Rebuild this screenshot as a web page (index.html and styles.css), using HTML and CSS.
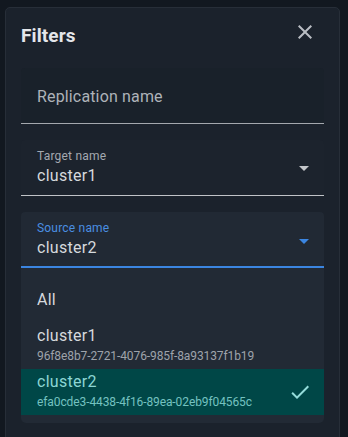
FILE: index.html
```html
<!DOCTYPE html>
<html>
<head>
<meta charset="utf-8">
<link rel="stylesheet" href="styles.css">
</head>
<body>
<div class="dialog">
  <div class="header">
    <h2 class="title">Filters</h2>
    <button class="close" aria-label="Close">
      <svg width="24" height="24" viewBox="0 0 24 24"><path d="M19 6.41 17.59 5 12 10.59 6.41 5 5 6.41 10.59 12 5 17.59 6.41 19 12 13.41 17.59 19 19 17.59 13.41 12z" fill="currentColor"/></svg>
    </button>
  </div>
  <div class="fields">
    <div class="field field-empty">
      <span class="placeholder">Replication name</span>
    </div>
    <div class="field field-select">
      <div class="field-text">
        <span class="label">Target name</span>
        <span class="value">cluster1</span>
      </div>
      <svg class="arrow" width="24" height="24" viewBox="0 0 24 24"><path d="M7 10l5 5 5-5z" fill="currentColor"/></svg>
    </div>
    <div class="select-wrap">
      <div class="field field-select field-focused">
        <div class="field-text">
          <span class="label">Source name</span>
          <span class="value">cluster2</span>
        </div>
        <svg class="arrow" width="24" height="24" viewBox="0 0 24 24"><path d="M7 10l5 5 5-5z" fill="currentColor"/></svg>
      </div>
      <ul class="menu">
        <li class="item item-single">All</li>
        <li class="item">
          <div class="item-text">
            <span class="primary">cluster1</span>
            <span class="secondary">96f8e8b7-2721-4076-985f-8a93137f1b19</span>
          </div>
        </li>
        <li class="item item-selected">
          <div class="item-text">
            <span class="primary">cluster2</span>
            <span class="secondary">efa0cde3-4438-4f16-89ea-02eb9f04565c</span>
          </div>
          <svg class="check" width="24" height="24" viewBox="0 0 24 24"><path d="M9 16.17 4.83 12l-1.42 1.41L9 19 21 7l-1.41-1.41z" fill="currentColor"/></svg>
        </li>
      </ul>
    </div>
  </div>
</div>
</body>
</html>
```

FILE: styles.css
```css
* { box-sizing: border-box; }
html, body {
  margin: 0;
  padding: 0;
  background: #121820;
  font-family: Roboto, "Liberation Sans", sans-serif;
  height: 100%;
  overflow: hidden;
}
body {
  padding: 7px 8px 0 5px;
}
.dialog {
  width: 335px;
  height: 460px;
  background: #1b222c;
  border: 1px solid #272e38;
  border-radius: 5px;
  padding: 0 15px 0 15px;
}
.header {
  display: flex;
  align-items: center;
  justify-content: space-between;
  height: 60px;
}
.title {
  margin: 0;
  font-size: 19px;
  font-weight: 700;
  color: #e4e6ea;
  letter-spacing: 0.1px;
  line-height: 56px;
  margin-bottom: 4px;
}
.close {
  background: none;
  border: 0;
  padding: 0;
  width: 24px;
  height: 24px;
  color: #b9bdc3;
  margin-right: 7px;
  margin-top: -12px;
}
.close svg { display: block; }
.fields {
  display: flex;
  flex-direction: column;
  gap: 16px;
}
.field {
  height: 56px;
  border-radius: 4px 4px 0 0;
  display: flex;
  align-items: center;
  padding: 0 8px 0 16px;
  position: relative;
}
.field-empty {
  background: #19212a;
  border-bottom: 1px solid #a4a8ae;
}
.placeholder {
  font-size: 16px;
  color: #aeb3b9;
  letter-spacing: 0.15px;
  padding-top: 2px;
}
.field-select {
  background: #1c232d;
  border-bottom: 1px solid #c0c3c7;
  justify-content: space-between;
}
.field-focused {
  background: #212934;
  border-bottom: 2px solid #3b85e0;
}
.field-text {
  display: flex;
  flex-direction: column;
  padding-top: 1px;
}
.label {
  font-size: 12px;
  line-height: 16px;
  color: #a4a9b0;
  letter-spacing: 0.2px;
}
.field-focused .label { color: #4a8fe2; }
.value {
  font-size: 16px;
  line-height: 24px;
  color: #d6d9dd;
  letter-spacing: 0.3px;
}
.arrow {
  color: #c3c6ca;
  margin-top: 1px;
}
.field-focused .arrow { color: #3b85e0; margin-top: 3px; }
.select-wrap {
  display: flex;
  flex-direction: column;
}
.menu {
  list-style: none;
  margin: 0;
  padding: 8px 0;
  background: #222a35;
  border-radius: 0 0 5px 5px;
}
.item {
  height: 46px;
  padding: 0 12px 0 16px;
  display: flex;
  align-items: center;
  justify-content: space-between;
  color: #d6d9dd;
}
.item:nth-child(2) { height: 47px; }
.item-single {
  font-size: 16px;
  letter-spacing: 0.2px;
}
.item-text {
  display: flex;
  flex-direction: column;
}
.primary {
  font-size: 16px;
  line-height: 20px;
  letter-spacing: 0.3px;
  color: #d6d9dd;
}
.secondary {
  font-size: 12px;
  line-height: 20px;
  letter-spacing: -0.1px;
  color: #9ea3ab;
}
.item-selected {
  background: #004747;
}
.item-selected .primary { color: #8cd6d4; }
.item-selected .secondary { color: #74c2c0; }
.check {
  color: #94dcda;
}
```
